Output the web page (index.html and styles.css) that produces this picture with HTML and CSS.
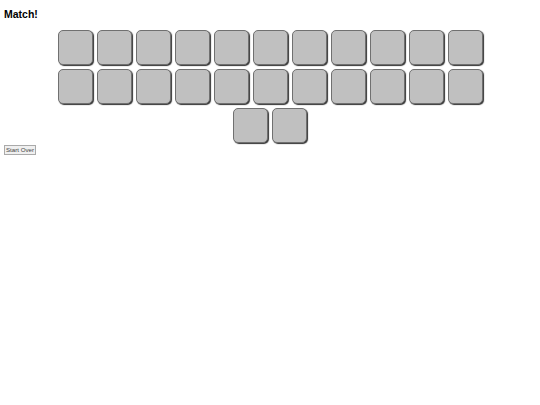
FILE: index.html
```html
<!DOCTYPE html>
<html>
<head>
<meta charset="utf-8">
<link rel="stylesheet" href="styles.css">
</head>
<body>
<h1 class="title">Match!</h1>
<div class="board">
  <div class="card"></div><div class="card"></div><div class="card"></div><div class="card"></div>
  <div class="card"></div><div class="card"></div><div class="card"></div><div class="card"></div>
  <div class="card"></div><div class="card"></div><div class="card"></div>
  <div class="card"></div><div class="card"></div><div class="card"></div><div class="card"></div>
  <div class="card"></div><div class="card"></div><div class="card"></div><div class="card"></div>
  <div class="card"></div><div class="card"></div><div class="card"></div>
  <div class="card"></div><div class="card"></div>
</div>
<button class="restart">Start Over</button>
</body>
</html>
```
FILE: styles.css
```css
html, body { margin: 0; padding: 0; background: #fff; }
body { padding: 0 4px; font-family: "Liberation Sans", Arial, sans-serif; }
.title { font-size: 10.5px; font-weight: bold; margin: 0; padding-top: 8px; height: 20px; line-height: 12px; color: #000; }
.board { width: 429px; margin: 0 auto; display: flex; flex-wrap: wrap; justify-content: center; }
.card {
  box-sizing: border-box;
  width: 35px; height: 35px;
  margin: 2px;
  background: #c0c0c0;
  border: 1px solid #707070;
  border-radius: 5px;
  box-shadow: 1px 1px 1px #333;
}
.restart {
  display: block;
  box-sizing: border-box;
  width: 32px;
  margin-top: 0;
  font-family: "Liberation Sans", Arial, sans-serif;
  font-size: 6.2px;
  padding: 0;
  background: #f0f0f0;
  border: 1px solid #aaa;
  color: #444;
  height: 10px;
  line-height: 8px;
}
```
